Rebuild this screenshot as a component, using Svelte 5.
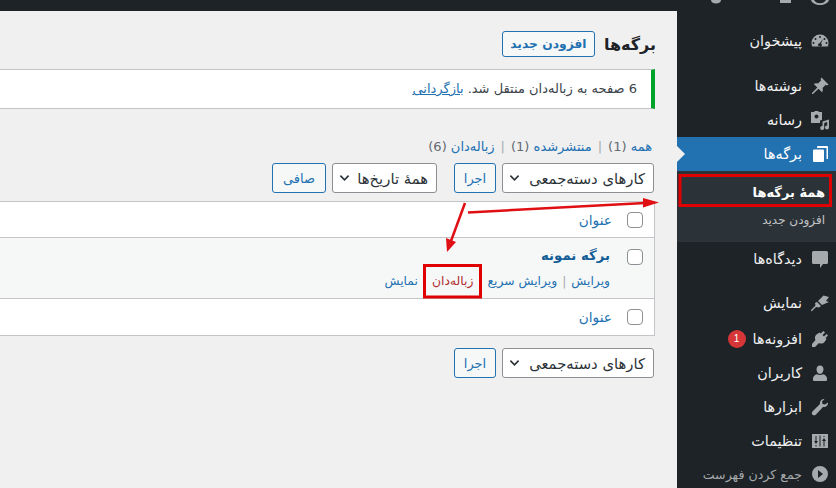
<script>
  const menu1 = [
    { label: 'نوشته‌ها', icon: 'pin' },
    { label: 'رسانه', icon: 'media' }
  ];
  const menu2 = [
    { label: 'افزونه‌ها', icon: 'plugin', badge: '1' },
    { label: 'کاربران', icon: 'user' },
    { label: 'ابزارها', icon: 'tool' },
    { label: 'تنظیمات', icon: 'settings' }
  ];
</script>

{#snippet icon(name)}
  <svg class="ico" viewBox="0 0 20 20" aria-hidden="true">
    {#if name === 'dash'}
      <path fill-rule="evenodd" d="M10 3.500a8.500 8.500 0 0 0-8.500 8.500c0 1.300.3 2.400.8 3.500h15.400c.5-1.100.8-2.200.8-3.500A8.500 8.500 0 0 0 10 3.500zm0 1.500a1 1 0 1 1 0 2 1 1 0 0 1 0-2zM5.500 7a1 1 0 1 1 0 2 1 1 0 0 1 0-2zm9 0a1 1 0 1 1 0 2 1 1 0 0 1 0-2zM13 7.800l-2 4.700a1.800 1.800 0 1 1-1.300-.3zM3.500 11a1 1 0 1 1 0 2 1 1 0 0 1 0-2zm13 0a1 1 0 1 1 0 2 1 1 0 0 1 0-2z"/>
    {:else if name === 'pin'}
      <path d="M11.500 1.500 18.500 8.500 17 9.500 15.800 8.800 12.500 12c.6 1.500.4 3-.5 4.200L8.500 12.700 3 18l-1 0 0-1 5.300-5.500L3.800 8c1.200-.9 2.700-1.100 4.200-.5L11.200 4.200 10.500 3z"/>
    {:else if name === 'media'}
      <path fill-rule="evenodd" d="M1 2h3l1-1h3l1 1h3v8l-2 .5V13H1zm5.500 2.500a2 2 0 1 0 0 4 2 2 0 0 0 0-4zM12.500 11.500 19 9.500v8a2 2 0 1 1-1.800-2V12l-3 .9V18a2 2 0 1 1-1.700-2z"/>
    {:else if name === 'pages'}
      <path d="M8 2h9a1 1 0 0 1 1 1v12h-1.500V4H7V3a1 1 0 0 1 1-1zM4 5.500h9a1 1 0 0 1 1 1V17a1 1 0 0 1-1 1H4a1 1 0 0 1-1-1V6.500a1 1 0 0 1 1-1z"/>
    {:else if name === 'comment'}
      <path d="M3.500 2h13a1.500 1.500 0 0 1 1.500 1.500v10a1.500 1.500 0 0 1-1.500 1.500H13l-3 4v-4H3.500A1.500 1.500 0 0 1 2 13.500v-10A1.500 1.500 0 0 1 3.500 2z"/>
    {:else if name === 'brush'}
      <path d="M19 4 13.500 2.500 8 8l4 4 7-3-3-1zM7 9l4 4-2 1.500-3-.5-4.500 4.500L1 17l4.500-4.500L5 10z"/>
    {:else if name === 'plugin'}
      <path d="M13.500 2 15 3.500 12.500 6l1.500 1.500L16.500 5 18 6.500l-2.500 2.500 1 1-2 3c-1.500 1.800-4 2-5.500 1L5 18H2v-3l3.500-4c-1-1.500-.8-4 1-5.500l3-2 1 1z"/>
    {:else if name === 'user'}
      <path d="M10 2.500c2.100 0 3.500 1.700 3.500 3.800S12.100 11 10 11 6.500 8.400 6.500 6.300 7.900 2.500 10 2.500zM3 15.500c0-2.200 2-3.800 4-4.300 1.800 1 4.200 1 6 0 2 .5 4 2.100 4 4.300V17a1 1 0 0 1-1 1H4a1 1 0 0 1-1-1z"/>
    {:else if name === 'tool'}
      <path d="M18 5.500c.3 2.500-2 5-5 4.500L6 17.500c-1 1-2.500 1.200-3.500.2s-.8-2.500.2-3.500L10 7c-.5-3 2-5.300 4.500-5L12 4.500l.5 2.500 2.500.5z"/>
    {:else if name === 'settings'}
      <path fill-rule="evenodd" d="M2 3h16v14H2zM5.500 5v5H4l2 3 2-3H6.500V5zm0 9v1.500h1V14zm8 1.500h1V10H16l-2-3-2 3h1.500zm0-10.500v1h1V5zM9.500 4.500v11h1v-11z"/>
    {:else if name === 'collapse'}
      <path fill-rule="evenodd" d="M10 2a8 8 0 1 1 0 16 8 8 0 0 1 0-16zm3 8L8 6v8z"/>
    {/if}
  </svg>
{/snippet}

{#snippet bulk()}
  <div class="group">
    <div class="select wide"><span>کارهای دسته‌جمعی</span><svg class="chev" viewBox="0 0 12 8"><path d="M1.500 1.500 6 6l4.500-4.500"/></svg></div>
    <button class="btn">اجرا</button>
  </div>
{/snippet}

<div class="page" dir="rtl">
  <div class="adminbar">
    <svg class="baricons" viewBox="0 0 836 11" aria-hidden="true">
      <path d="M711 0h10c0 2-2 3.500-5 3.500S711 2 711 0z"/>
      <path d="M780 0h11v3h-11z"/>
      <path fill-rule="evenodd" d="M811 0h18c-1 3.500-5 5-9 5s-8-1.500-9-5zm3 0c1 2 3.500 3.300 6 3.300s5-1.300 6-3.300z"/>
    </svg>
  </div>
  <div class="layout">
    <nav class="side">
      <div class="item first">{@render icon('dash')}<span>پیشخوان</span></div>
      <div class="gap wide-gap"></div>
      {#each menu1 as m}
        <div class="item">{@render icon(m.icon)}<span>{m.label}</span></div>
      {/each}
      <div class="item current">{@render icon('pages')}<span>برگه‌ها</span></div>
      <div class="sub">
        <div class="subitem strong">همهٔ برگه‌ها</div>
        <div class="subitem add-new">افزودن جدید</div>
      </div>
      <div class="item">{@render icon('comment')}<span>دیدگاه‌ها</span></div>
      <div class="gap"></div>
      <div class="item appearance">{@render icon('brush')}<span>نمایش</span></div>
      {#each menu2 as m}
        <div class="item">{@render icon(m.icon)}<span>{m.label}</span>{#if m.badge}<b class="badge">{m.badge}</b>{/if}</div>
      {/each}
      <div class="item collapse">{@render icon('collapse')}<span>جمع کردن فهرست</span></div>
    </nav>

    <main class="content">
      <header class="head">
        <h1>برگه‌ها</h1>
        <button class="add">افزودن جدید</button>
      </header>

      <div class="notice">6 صفحه به زباله‌دان منتقل شد. <a href="#u">بازگردانی</a></div>

      <ul class="views">
        <li><a href="#a">همه</a> (1)</li>
        <li class="sep">|</li>
        <li><a href="#p">منتشرشده</a> (1)</li>
        <li class="sep">|</li>
        <li><a href="#t">زباله‌دان</a> (6)</li>
      </ul>

      <div class="toolbar">
        {@render bulk()}
        <div class="group">
          <div class="select dates"><span>همهٔ تاریخ‌ها</span><svg class="chev" viewBox="0 0 12 8"><path d="M1.500 1.500 6 6l4.500-4.500"/></svg></div>
          <button class="btn clear">صافی</button>
        </div>
      </div>

      <div class="table">
        <div class="row hd"><i class="check"></i><a href="#s">عنوان</a></div>
        <div class="row page-row">
          <i class="check"></i>
          <div class="cell">
            <a class="title" href="#e">برگه نمونه</a>
            <div class="actions">
              <a href="#e">ویرایش</a><em>|</em><a href="#q">ویرایش سریع</a><em class="hidden">|</em><a class="trash" href="#t">زباله‌دان</a><em>|</em><a href="#v">نمایش</a>
            </div>
          </div>
        </div>
        <div class="row ft"><i class="check"></i><a href="#s">عنوان</a></div>
      </div>

      <div class="toolbar bottom">{@render bulk()}</div>
    </main>
  </div>

  <svg class="marks" viewBox="0 0 836 488" aria-hidden="true">
    <rect x="680" y="175.500" width="150.500" height="30" />
    <rect x="424.500" y="265.500" width="56" height="31.500" />
    <path class="line" d="M468 212.500 645 203" />
    <path class="head-fill" d="M643 198 659 202.500 643 207.500z" />
    <path class="line" d="M465 203 451 241" />
    <path class="head-fill" d="M446 238 447 252 456 242z" />
  </svg>
</div>

<style>
  :global(body) { margin: 0; background: #f0f0f1; }
  .page {
    position: relative;
    width: 836px;
    height: 488px;
    overflow: hidden;
    font-family: "DejaVu Sans", sans-serif;
    font-size: 13px;
    color: #3c434a;
    background: #f0f0f1;
  }
  .adminbar { height: 11px; background: #1d2327; }
  .baricons { display: block; width: 836px; height: 11px; fill: #a7aaad; }
  .layout { display: flex; height: 477px; }

  .side {
    flex: 0 0 159px;
    background: #1d2327;
    color: #f0f0f1;
    box-sizing: border-box;
    padding-top: 13px;
    font-size: 14.400px;
  }
  .item {
    display: flex;
    align-items: center;
    gap: 8px;
    height: 34px;
    padding-right: 6px;
    position: relative;
  }
  .gap { height: 10px; }
  .wide-gap { height: 11px; }
  .appearance { margin-bottom: 2px; }
  .ico { width: 20px; height: 20px; fill: #a7aaad; flex: none; }
  .current { background: #2271b1; color: #fff; }
  .current .ico { fill: #fff; }
  .current::after {
    content: "";
    position: absolute;
    left: 0;
    top: 9px;
    border: 8px solid transparent;
    border-left-color: #f0f0f1;
  }
  .sub { background: #2c3338; padding: 8px 0 8px; }
  .subitem { height: 28px; line-height: 28px; padding-right: 11px; font-size: 12px; color: #c3c4c7; }
  .subitem.strong { font-weight: 700; color: #fff; font-size: 13px; }
  .add-new { height: 27px; line-height: 27px; }
  .badge {
    width: 18px; height: 18px; border-radius: 50%;
    background: #d63638; color: #fff;
    font: 400 10px/18px "Liberation Sans", sans-serif;
    text-align: center;
    margin-right: -1px;
  }
  .collapse { color: #a7aaad; font-size: 12.600px; margin-top: -1px; }

  .content { flex: 1; min-width: 0; padding: 0 22px 0 0; overflow: hidden; }

  .head { display: flex; align-items: center; gap: 9px; height: 44px; margin: 11px -1px 0 0; }
  h1 { margin: 0; font-size: 16px; font-weight: 700; color: #1d2327; }
  .add {
    font: 700 12.300px "DejaVu Sans", sans-serif;
    height: 26px; width: 93px; padding: 0;
    color: #2271b1; background: #f6f7f7;
    border: 1px solid #2271b1; border-radius: 3px;
  }

  .notice {
    width: 800px;
    box-sizing: border-box;
    height: 40px;
    margin-top: 3px;
    line-height: 38px;
    padding-right: 14px;
    background: #fff;
    border: 1px solid #c3c4c7;
    border-right: 4px solid #00a32a;
  }
  a { color: #2271b1; text-decoration: none; }
  .notice a { text-decoration: underline; }

  .views { list-style: none; display: flex; gap: 6px; margin: 28px 3px 0 0; padding: 0; height: 18px; align-items: center; color: #646970; }
  .views a { color: #2271b1; }
  .sep { color: #a7aaad; }

  .toolbar { display: flex; gap: 6px; margin-top: 8px; margin-right: 1px; }
  .group { display: flex; gap: 6px; }
  .toolbar > .group + .group { margin-right: 11px; }
  .select {
    box-sizing: border-box; height: 30px;
    display: flex; align-items: center; justify-content: space-between;
    padding: 0 8px 0 6px;
    background: #fff; border: 1px solid #8c8f94; border-radius: 3px;
    color: #2c3338; font-size: 14.800px;
  }
  .wide { width: 152px; }
  .dates { width: 105px; }
  .chev { width: 11px; height: 8px; fill: none; stroke: #2c3338; stroke-width: 1.800; flex: none; }
  .btn {
    box-sizing: border-box; height: 30px; width: 42px; padding: 0;
    font: 13px "DejaVu Sans", sans-serif;
    color: #2271b1; background: #f6f7f7;
    border: 1px solid #2271b1; border-radius: 3px;
  }
  .clear { width: 54px; }

  .table {
    width: 800px; box-sizing: border-box;
    margin-top: 8px;
    background: #fff;
    border: 1px solid #c3c4c7;
  }
  .row { display: flex; gap: 15px; padding-right: 11px; font-size: 13.700px; }
  .check {
    flex: none; width: 16px; height: 16px;
    box-sizing: border-box;
    background: #fff; border: 1px solid #8c8f94; border-radius: 4px;
  }
  .hd, .ft { align-items: center; box-sizing: border-box; }
  .hd { height: 36px; border-bottom: 1px solid #c3c4c7; }
  .ft { height: 37px; border-top: 1px solid #c3c4c7; }
  .page-row { height: 60px; background: #f6f7f7; padding-top: 10px; box-sizing: border-box; gap: 17px; }
  .page-row .check { margin-top: 1px; }
  .title { display: block; font-weight: 700; font-size: 13.300px; color: #135e96; height: 26px; }
  .actions { display: flex; align-items: center; gap: 3px; font-size: 12.300px; white-space: nowrap; }
  .actions em { font-style: normal; color: #a7aaad; padding: 0 2px; }
  .hidden { visibility: hidden; }
  .trash { color: #b32d2e; }
  .toolbar.bottom { margin-top: 12px; }

  .marks { position: absolute; inset: 0; width: 836px; height: 488px; pointer-events: none; }
  .marks rect { fill: none; stroke: #e00000; stroke-width: 3; }
  .line { fill: none; stroke: #e00f14; stroke-width: 2.500; }
  .head-fill { fill: #e00f14; }
</style>
